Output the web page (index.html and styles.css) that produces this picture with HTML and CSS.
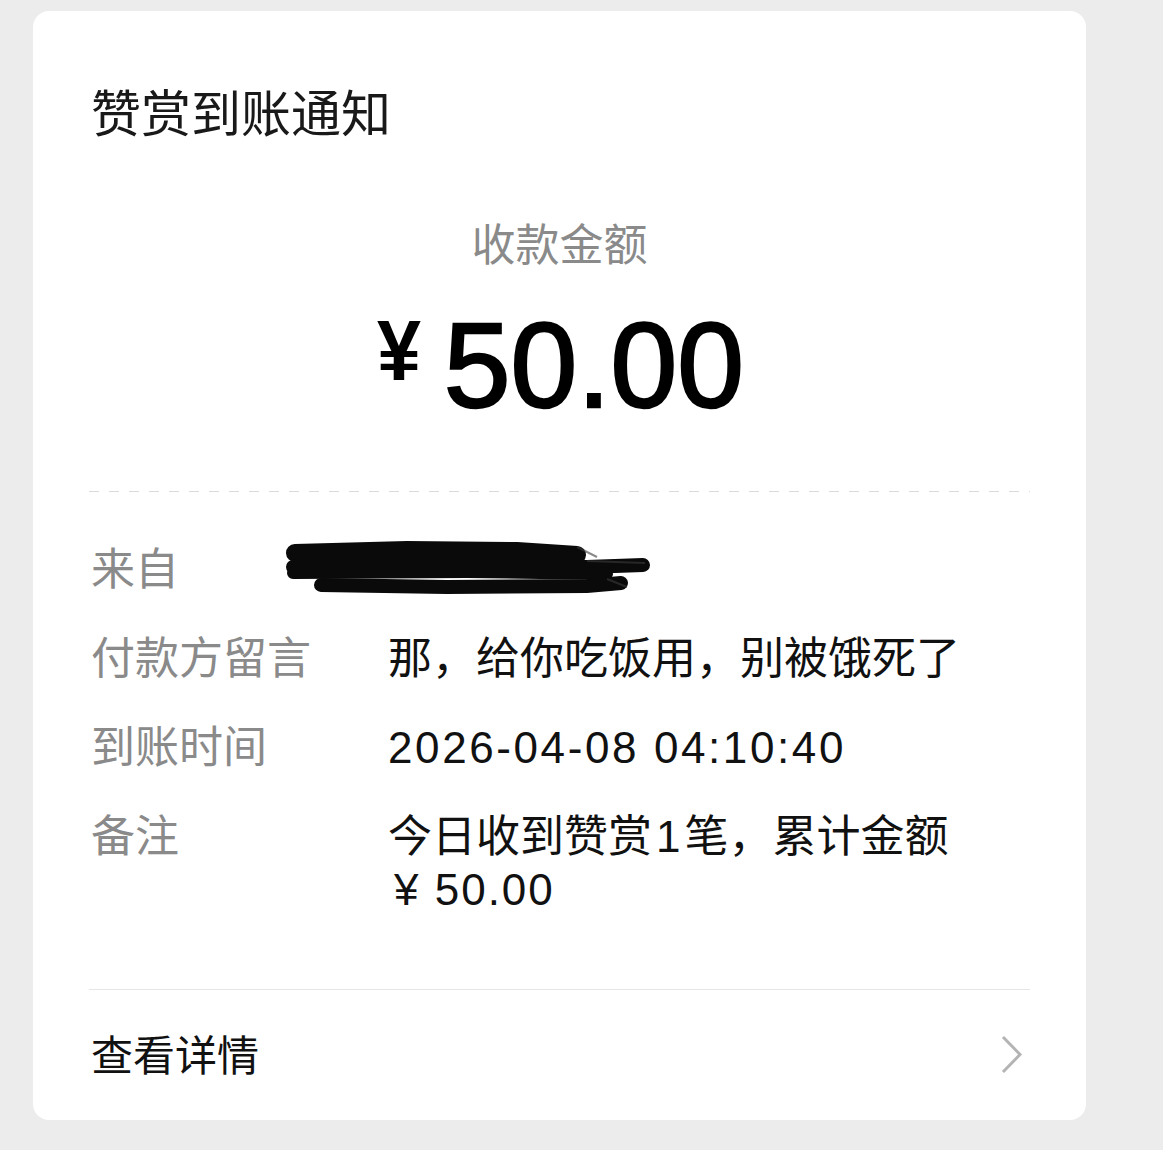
FILE: index.html
```html
<!DOCTYPE html>
<html lang="zh-CN">
<head>
    <meta charset="UTF-8">
    <meta name="viewport" content="width=device-width, initial-scale=1.0">
    <title>赞赏到账通知</title>
    <link rel="stylesheet" href="styles.css">
</head>
<body>
    <div class="card">
        <h1 class="title">赞赏到账通知</h1>

        <div class="amount-label">收款金额</div>
        <div class="amount">
            <span class="yen">¥</span>
            <span class="value">50.00</span>
        </div>

        <div class="dashed"></div>

        <div class="rows">
            <div class="row">
                <div class="label">来自</div>
                <div class="text">
                    <svg class="redact" width="362" height="53" viewBox="0 0 362 53">
                        <g stroke="#0a0a0a" stroke-linecap="round" fill="none">
                            <path d="M8 10 L120 7 L230 8 L290 12" stroke-width="18"/>
                            <path d="M6 24 L140 22 L300 24 L356 22" stroke-width="14"/>
                            <path d="M6 30 L180 29 L320 31" stroke-width="12"/>
                            <path d="M34 42 L160 44 L300 43 L334 40" stroke-width="14"/>
                        </g>
                        <g stroke="#3a3a3a" stroke-width="2" fill="none" opacity="0.6">
                            <path d="M290 4 L310 14 M300 18 L358 20 M320 36 L340 44"/>
                        </g>
                    </svg>
                </div>
            </div>
            <div class="row">
                <div class="label">付款方留言</div>
                <div class="text">那，给你吃饭用，别被饿死了</div>
            </div>
            <div class="row">
                <div class="label">到账时间</div>
                <div class="text num">2026-04-08 04:10:40</div>
            </div>
            <div class="row">
                <div class="label">备注</div>
                <div class="text">今日收到赞赏<span class="one">1</span>笔，累计金额<br><span class="num money">¥ 50.00</span></div>
            </div>
        </div>

        <div class="divider"></div>

        <a href="#" class="detail">
            <span>查看详情</span>
            <svg class="chevron" width="24" height="40" viewBox="0 0 24 40">
                <path d="M3 2 L20 19.5 L3 37" fill="none" stroke="#b4b4b4" stroke-width="3"/>
            </svg>
        </a>
    </div>
</body>
</html>
```

FILE: styles.css
```css
:root {
    --page-bg: #ececec;
    --card-bg: #ffffff;
    --text-color: #111111;
    --gray-text: #8a8a8a;
    --line-color: #e6e6e6;
}

* {
    margin: 0;
    padding: 0;
    box-sizing: border-box;
}

body {
    background-color: var(--page-bg);
    color: var(--text-color);
    font-family: "Liberation Sans", "Noto Sans CJK SC", sans-serif;
    padding: 11px 0 0 33px;
}

.card {
    width: 1053px;
    background-color: var(--card-bg);
    border-radius: 16px;
    padding: 74px 56px 0;
}

.title {
    font-size: 50px;
    line-height: 60px;
    font-weight: 400;
    color: #191919;
    padding-left: 2px;
}

.amount-label {
    margin-top: 74px;
    text-align: center;
    font-size: 44px;
    line-height: 53px;
    color: var(--gray-text);
}

.amount {
    margin-top: 32px;
    display: flex;
    justify-content: center;
    align-items: flex-start;
    color: #000;
}

.amount .yen {
    font-size: 86px;
    line-height: 86px;
    font-weight: 700;
    margin-top: 3px;
    margin-right: 21px;
    transform: scaleX(0.92);
}

.amount .value {
    font-size: 120px;
    line-height: 122px;
    -webkit-text-stroke: 2.4px #000;
}

.dashed {
    margin-top: 65px;
    height: 1px;
    background: repeating-linear-gradient(90deg, #dadada 0 10px, transparent 10px 20px);
}

.rows {
    margin-top: 51px;
    display: flex;
    flex-direction: column;
    gap: 36px;
}

.row {
    display: grid;
    grid-template-columns: 299px 1fr;
    font-size: 44px;
    line-height: 53px;
}

.label {
    color: var(--gray-text);
    padding-left: 2px;
}

.text {
    color: var(--text-color);
}

.num {
    letter-spacing: 2.6px;
}

.one {
    padding: 0 4px;
}

.money {
    padding-left: 6px;
    letter-spacing: 2px;
}

.redact {
    display: block;
    margin-left: -101px;
    overflow: visible;
}

.divider {
    margin-top: 73px;
    height: 1px;
    background-color: var(--line-color);
}

.detail {
    height: 130px;
    padding-bottom: 6px;
    padding-left: 2px;
    display: flex;
    align-items: center;
    justify-content: space-between;
    font-size: 42px;
    color: var(--text-color);
    text-decoration: none;
}

.chevron {
    margin-right: 6px;
    margin-top: 6px;
}
```
